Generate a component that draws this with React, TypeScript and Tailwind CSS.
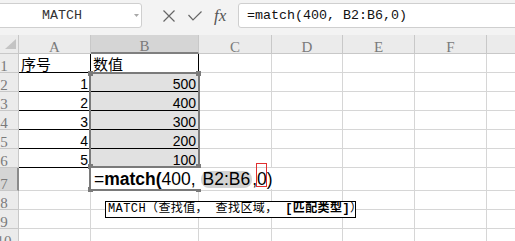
import React from "react";

const cols = [
  { key: "A", w: "w-[72px]" },
  { key: "B", w: "w-[108px]" },
  { key: "C", w: "w-[73px]" },
  { key: "D", w: "w-[71px]" },
  { key: "E", w: "w-[72px]" },
  { key: "F", w: "w-[72px]" },
  { key: "G", w: "w-[60px]" },
];

type Row = { n: number; tall?: boolean; a?: string; b?: string };

const rows: Row[] = [
  { n: 1, a: "序号", b: "数值" },
  { n: 2, a: "1", b: "500" },
  { n: 3, a: "2", b: "400" },
  { n: 4, a: "3", b: "300" },
  { n: 5, a: "4", b: "200" },
  { n: 6, a: "5", b: "100" },
  { n: 7, tall: true },
  { n: 8 },
  { n: 9 },
  { n: 10 },
];

function Handle({ pos }: { pos: string }) {
  return <span className={`absolute h-[5px] w-[5px] bg-[#7a7a7a] ${pos}`} />;
}

export default function App() {
  return (
    <div className="h-[241px] w-[515px] overflow-hidden bg-white">
      {/* formula bar */}
      <div className="flex h-[35px] items-start bg-[#f3f3f3] pt-[3px]">
        <div className="ml-[-10px] flex h-[25px] w-[152px] shrink-0 items-center rounded-[3px] border border-[#cfcfcf] bg-white pl-[51px] pr-[2px]">
          <span className="font-['Liberation_Mono'] text-[13.3px] text-[#333]">MATCH</span>
          <svg className="ml-auto" width="5" height="3" viewBox="0 0 5 3">
            <polygon points="0,0 5,0 2.5,3" fill="#a8a8a8" />
          </svg>
        </div>
        <div className="flex h-[25px] w-[96px] shrink-0 items-center">
          <svg className="ml-[21px]" width="12" height="12" viewBox="0 0 12 12">
            <path d="M0.5 0.5 L11.5 11.5 M11.5 0.5 L0.5 11.5" stroke="#666" strokeWidth="1.2" fill="none" />
          </svg>
          <svg className="ml-[13px]" width="14" height="10" viewBox="0 0 14 10">
            <path d="M0.5 4 L5 9 L13.5 0.5" stroke="#666" strokeWidth="1.2" fill="none" />
          </svg>
          <span className="ml-[12px] font-['Liberation_Serif'] text-[17px] italic text-[#555]">fx</span>
        </div>
        <div className="mr-[-10px] flex h-[25px] flex-1 items-center rounded-[3px] border border-[#cfcfcf] bg-white pl-[8px]">
          <span className="whitespace-pre font-['Liberation_Mono'] text-[13.33px] text-[#111]">=match(400, B2:B6,0)</span>
        </div>
      </div>

      {/* sheet */}
      <div className="relative">
        <div className="flex h-[19px] bg-[#ebebeb]">
          <div className="relative w-[19px] shrink-0 border-b border-r border-[#c8c8c8]">
            <svg className="absolute bottom-[4px] right-[2px]" width="11" height="10" viewBox="0 0 11 10">
              <polygon points="11,0 11,10 0,10" fill="#c4c4c4" />
            </svg>
          </div>
          {cols.map((c) => (
            <div
              key={c.key}
              className={`${c.w} flex shrink-0 items-end justify-center border-r border-[#c8c8c8] font-['Liberation_Serif'] text-[15px] leading-[12px] text-[#7a7a7a] ${
                c.key === "B" ? "border-b-2 border-b-[#7f7f7f] bg-[#d5d5d5]" : "border-b"
              }`}
            >
              {c.key === "G" ? "" : c.key}
            </div>
          ))}
        </div>

        {rows.map((r) => (
          <div key={r.n} className={`flex ${r.tall ? "h-[23px]" : "h-[19px]"}`}>
            <div
              className={`w-[19px] shrink-0 overflow-hidden border-b border-[#c8c8c8] ${
                r.n === 7 ? "border-r-2 border-r-[#8a8a8a] bg-[#d5d5d5]" : "border-r bg-[#ebebeb]"
              } flex items-end`}
            >
              <div className="ml-[-11px] w-[30px] shrink-0 text-center font-['Liberation_Serif'] text-[15px] leading-[12px] text-[#7a7a7a]">
                {r.n}
              </div>
            </div>
            {cols.map((c) => {
              const isData = r.n <= 6 && (c.key === "A" || c.key === "B");
              const inRange = r.n >= 2 && r.n <= 6 && c.key === "B";
              const text = c.key === "A" ? r.a : c.key === "B" ? r.b : undefined;
              const cjk = r.n === 1;
              return (
                <div
                  key={c.key}
                  className={`${c.w} flex shrink-0 items-end border-b border-r px-[2px] text-black ${
                    isData ? "border-black" : "border-[#d6d6d6]"
                  } ${inRange ? "bg-[#e1e1e1]" : "bg-white"} ${
                    cjk
                      ? "justify-start pb-[1px] font-['Noto_Sans_CJK_SC'] text-[15px] leading-[15px]"
                      : "justify-end font-['Liberation_Sans'] text-[14px] leading-[14px]"
                  }`}
                >
                  {text}
                </div>
              );
            })}
          </div>
        ))}

        {/* referenced range B2:B6 */}
        <div className="absolute left-[89px] top-[37px] h-[96px] w-[111px] border-2 border-[#7a7a7a]">
          <Handle pos="-left-[3px] -top-[3px]" />
          <Handle pos="-right-[3px] -top-[3px]" />
          <Handle pos="-bottom-[3px] -left-[3px]" />
          <Handle pos="-bottom-[3px] -right-[3px]" />
        </div>

        {/* active cell B7 */}
        <div className="absolute left-[89px] top-[131px] h-[25px] w-[111px] border-2 border-[#7a7a7a]">
          <Handle pos="-bottom-[3px] -left-[3px]" />
          <Handle pos="-bottom-[3px] -right-[3px]" />
        </div>
        <div className="absolute left-[91px] top-[133px] h-[21px] w-[186px] whitespace-pre bg-white pl-[3px] pt-[1px] font-['Liberation_Sans'] text-[17.5px] leading-[20px] text-black">
          =<b>match(</b>400,{" "}
          <span className="inline-block rounded-[8px] bg-[#d3d3d3] px-[2px] leading-[17px]">B2:B6</span>,
          <span className="relative">
            0<span className="absolute -left-[1px] -top-[6px] h-[24px] w-[11px] border border-[#e03030]" />
          </span>
          )
        </div>

        {/* function tooltip */}
        <div className="absolute left-[105px] top-[166px] h-[17px] w-[251px] whitespace-pre border border-black bg-white pl-[2px] font-['Liberation_Mono','Noto_Sans_CJK_SC',monospace] text-[12px] leading-[15px] tracking-[0.4px] text-black">
          MATCH（查找值， 查找区域， <b>[匹配类型]</b>）
        </div>
      </div>
    </div>
  );
}
